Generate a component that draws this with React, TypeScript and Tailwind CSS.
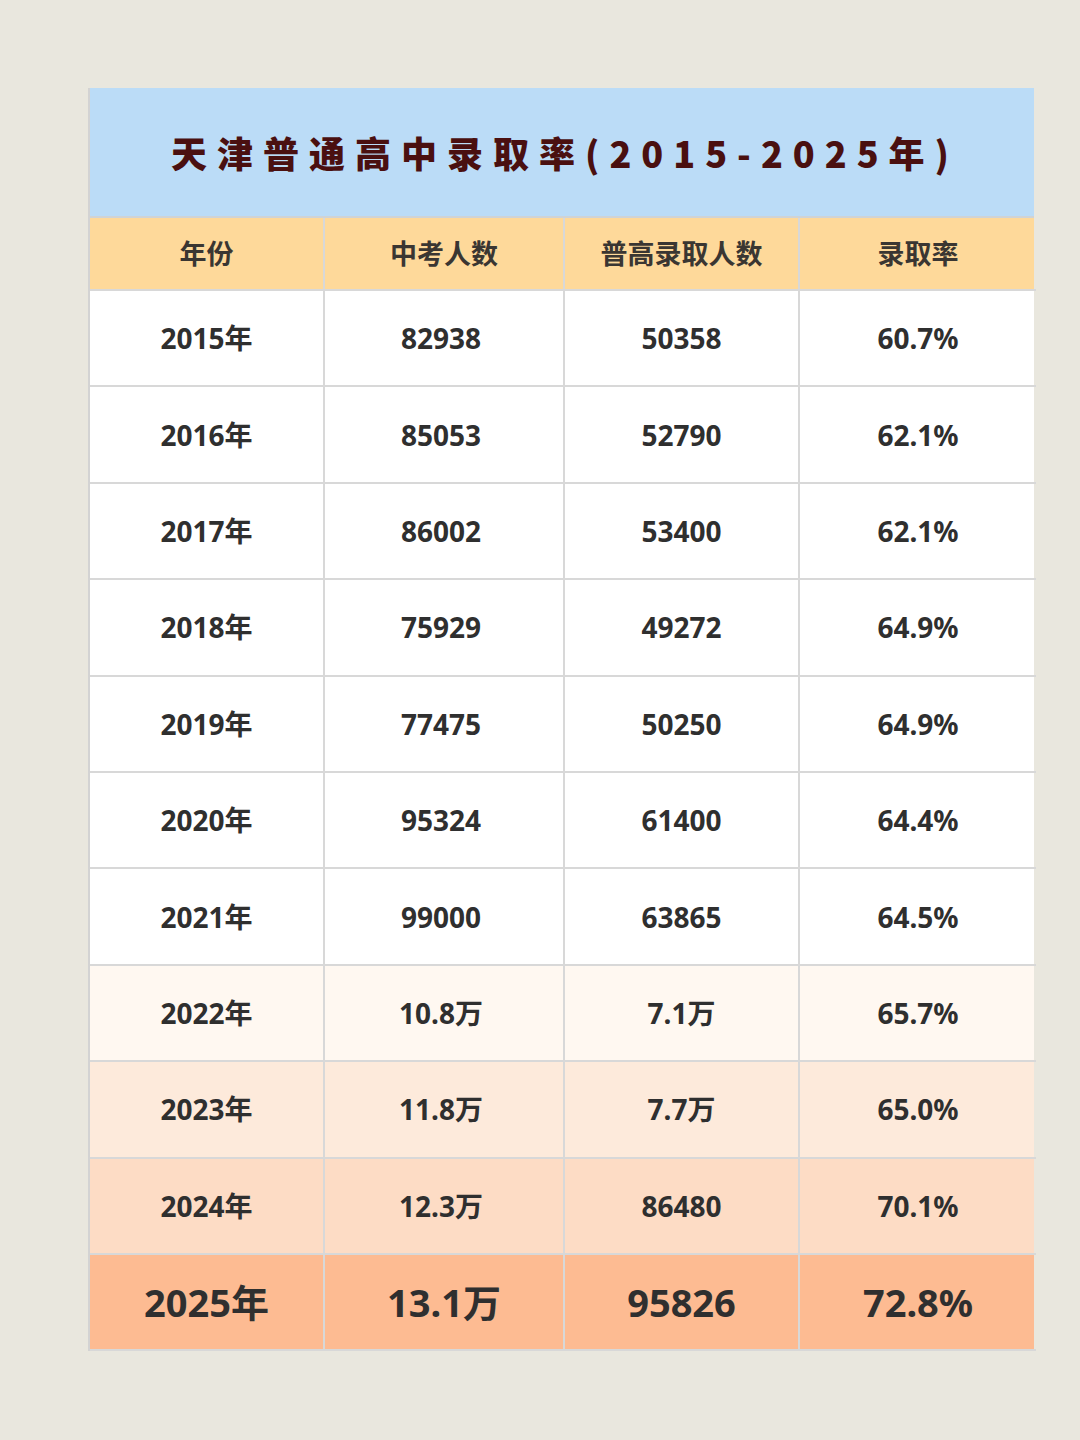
const rows = [
  { year: "2015年", total: "82938", admit: "50358", rate: "60.7%", bg: "bg-white" },
  { year: "2016年", total: "85053", admit: "52790", rate: "62.1%", bg: "bg-white" },
  { year: "2017年", total: "86002", admit: "53400", rate: "62.1%", bg: "bg-white" },
  { year: "2018年", total: "75929", admit: "49272", rate: "64.9%", bg: "bg-white" },
  { year: "2019年", total: "77475", admit: "50250", rate: "64.9%", bg: "bg-white" },
  { year: "2020年", total: "95324", admit: "61400", rate: "64.4%", bg: "bg-white" },
  { year: "2021年", total: "99000", admit: "63865", rate: "64.5%", bg: "bg-white" },
  { year: "2022年", total: "10.8万", admit: "7.1万", rate: "65.7%", bg: "bg-[#fff8f1]" },
  { year: "2023年", total: "11.8万", admit: "7.7万", rate: "65.0%", bg: "bg-[#fdeadb]" },
  { year: "2024年", total: "12.3万", admit: "86480", rate: "70.1%", bg: "bg-[#fddcc5]" },
];

const headers = ["年份", "中考人数", "普高录取人数", "录取率"];

const font = { fontFamily: '"Noto Sans", "Noto Sans CJK SC", sans-serif' };

const Cell = ({ children, last }: { children: React.ReactNode; last?: boolean }) => (
  <div
    className={`flex items-center justify-center border-b-2 border-[#d8d8d8] ${last ? "" : "border-r-2"}`}
  >
    {children}
  </div>
);

export default function App() {
  return (
    <div className="min-h-[1440px] w-[1080px] bg-[#e9e7de] pt-[88px] pl-[88px]" style={font}>
      <div className="w-[946px] border-l-2 border-[#d3d3d3]">
        {/* Title */}
        <div className="h-[130px] bg-[#bbdcf7] flex items-center justify-center border-b-2 border-[#cfd3d6]">
          <h1
            className="text-[36px] font-black text-[#4a1010] tracking-[10px] pl-[6px]"
            style={{ fontFamily: '"Noto Sans CJK SC", sans-serif' }}
          >
            天津普通高中录取率(2015-2025年)
          </h1>
        </div>

        {/* Header */}
        <div className="grid grid-cols-[235px_240px_235px_236px] h-[73px] bg-[#fed99a] text-[#3a3632] text-[27px] font-bold">
          {headers.map((h, i) => (
            <Cell key={h} last={i === 3}>
              <span style={{ fontFamily: '"Noto Sans CJK SC", sans-serif' }}>{h}</span>
            </Cell>
          ))}
        </div>

        {/* Rows */}
        {rows.map((r) => (
          <div
            key={r.year}
            className={`grid grid-cols-[235px_240px_235px_236px] h-[96.4px] text-[28px] font-bold text-[#2f2f2f] ${r.bg}`}
          >
            <Cell>{r.year}</Cell>
            <Cell>
              <span className="pr-[6px]">{r.total}</span>
            </Cell>
            <Cell>{r.admit}</Cell>
            <Cell last>{r.rate}</Cell>
          </div>
        ))}

        {/* 2025 */}
        <div className="grid grid-cols-[235px_240px_235px_236px] h-[96.4px] text-[38px] font-bold text-[#2f2f2f] bg-[#fdbb92]">
          <Cell>2025年</Cell>
          <Cell>13.1万</Cell>
          <Cell>95826</Cell>
          <Cell last>72.8%</Cell>
        </div>
      </div>
    </div>
  );
}
